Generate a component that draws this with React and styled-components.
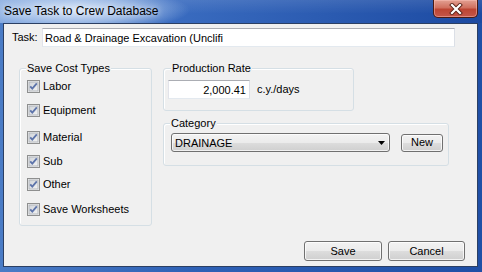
import React from 'react';
import styled, { createGlobalStyle } from 'styled-components';

const Global = createGlobalStyle`
  html, body { margin: 0; padding: 0; background: #fff; }
  body { font-family: "Liberation Sans", Arial, sans-serif; font-size: 11px; color: #000; }
  * { box-sizing: border-box; }
`;

const Window = styled.div`
  width: 482px;
  height: 272px;
  display: flex;
  flex-direction: column;
  overflow: hidden;
  background: linear-gradient(90deg, #4a7cc6 0%, #2e61b6 40%, #1f4fa6 100%);
`;

const TitleBar = styled.div`
  height: 23px;
  flex: none;
  display: flex;
  justify-content: space-between;
  align-items: flex-start;
  background:
    radial-gradient(ellipse 115px 22px at 75px 10px, rgba(225, 236, 250, 0.95) 0%, rgba(185, 208, 240, 0.7) 55%, rgba(150, 185, 235, 0) 100%),
    linear-gradient(180deg, rgba(255,255,255,0.1) 0%, rgba(255,255,255,0) 60%),
    linear-gradient(90deg, #779fda 0%, #3a6cc0 35%, #1c4aa2 100%);
`;

const Title = styled.div`
  font-family: "Liberation Sans", Arial, sans-serif;
  font-size: 12px;
  line-height: 14px;
  padding: 4px 0 0 4px;
  color: #000;
  text-shadow: 0 0 6px rgba(255, 255, 255, 0.9);
`;

const CloseButton = styled.div`
  width: 45px;
  height: 18px;
  margin-right: 4px;
  display: flex;
  align-items: center;
  justify-content: center;
  border: 1px solid #4a1a14;
  border-top: none;
  border-radius: 0 0 5px 5px;
  background: linear-gradient(180deg, #e3a092 0%, #d0705f 45%, #bd4533 55%, #c4564a 100%);
  box-shadow: inset 0 0 0 1px rgba(255, 200, 190, 0.45);
`;

const Client = styled.div`
  flex: 1;
  margin: 0 4px 5px 3px;
  border: 1px solid #2b3f63;
  background: #f0f0f0;
  display: flex;
  flex-direction: column;
  padding: 4px 0 0 8px;
`;

const TaskRow = styled.div`
  display: flex;
  align-items: center;
  height: 19px;
`;

const Label = styled.span`
  width: ${p => p.$w || 'auto'};
  white-space: nowrap;
  line-height: 13px;
`;

const TextBox = styled.div`
  width: ${p => p.$w}px;
  height: 19px;
  background: #fff;
  border: 1px solid;
  border-color: #abadb3 #dbdfe6 #e3e9ef #e2e3ea;
  display: flex;
  align-items: center;
  justify-content: ${p => (p.$right ? 'flex-end' : 'flex-start')};
  padding: 0 3px 0 2px;
  white-space: nowrap;
  overflow: hidden;
`;

const Main = styled.div`
  display: flex;
  margin-top: 21px;
`;

const GroupBox = styled.div`
  position: relative;
  width: ${p => p.$w}px;
  height: ${p => p.$h}px;
  margin-left: ${p => p.$ml || 0}px;
  border: 1px solid #d5dfe5;
  border-radius: 3px;
  box-shadow: inset 1px 1px 0 #fff;
  padding: ${p => p.$pad || '0'};
  flex: none;
`;

const Legend = styled.span`
  position: absolute;
  top: -7px;
  left: ${p => p.$left}px;
  padding: 0 1px;
  line-height: 13px;
  background: #f0f0f0;
  white-space: nowrap;
`;

const CheckList = styled.div`
  display: flex;
  flex-direction: column;
  padding-left: 7px;
`;

const CheckRow = styled.div`
  display: flex;
  align-items: center;
  height: 13px;
  margin-top: ${p => p.$mt}px;
  gap: 3px;
`;

const RightCol = styled.div`
  display: flex;
  flex-direction: column;
  gap: 12px;
  margin-left: 11px;
`;

const InlineRow = styled.div`
  display: flex;
  align-items: center;
  gap: ${p => p.$gap}px;
`;

const Combo = styled.div`
  width: 219px;
  height: 19px;
  border: 1px solid #707070;
  border-radius: 3px;
  background: linear-gradient(180deg, #f3f3f3 0%, #ebebeb 50%, #dddddd 51%, #cfcfcf 100%);
  box-shadow: inset 0 0 0 1px rgba(255, 255, 255, 0.7);
  display: flex;
  align-items: center;
  justify-content: space-between;
  padding: 0 4px 0 3px;
`;

const PushButton = styled.div`
  width: ${p => p.$w}px;
  height: ${p => p.$h}px;
  border: 1px solid #707070;
  border-radius: 3px;
  background: linear-gradient(180deg, #f2f2f2 0%, #ebebeb 50%, #dddddd 51%, #cfcfcf 100%);
  box-shadow: inset 0 0 0 1px rgba(255, 255, 255, 0.75);
  display: flex;
  align-items: center;
  justify-content: center;
  line-height: 13px;
`;

const ButtonRow = styled.div`
  display: flex;
  justify-content: flex-end;
  gap: 6px;
  margin-top: 15px;
  padding-right: 12px;
`;

const CheckBox = () => (
  <svg width="13" height="13" viewBox="0 0 13 13">
    <defs>
      <linearGradient id="cbg" x1="0" y1="0" x2="1" y2="1">
        <stop offset="0" stopColor="#cfd3d8" />
        <stop offset="1" stopColor="#f4f4f4" />
      </linearGradient>
    </defs>
    <rect x="0.5" y="0.5" width="12" height="12" fill="#f4f4f4" stroke="#8e8f8f" />
    <rect x="2" y="2" width="9" height="9" fill="url(#cbg)" stroke="#b3b7bd" strokeWidth="1" />
    <path d="M3.2 6.3 L5.3 8.6 L9.8 3.3" fill="none" stroke="#5d74aa" strokeWidth="1.8" />
  </svg>
);

const CloseGlyph = () => (
  <svg width="16" height="12" viewBox="0 0 16 12">
    <path d="M4 2 L12 10 M12 2 L4 10" stroke="#5a2218" strokeWidth="4" strokeLinecap="square" />
    <path d="M4 2 L12 10 M12 2 L4 10" stroke="#fff" strokeWidth="2.2" strokeLinecap="square" />
  </svg>
);

const Arrow = () => (
  <svg width="7" height="4" viewBox="0 0 7 4">
    <path d="M0 0 H7 L3.5 4 Z" fill="#000" />
  </svg>
);

const costTypes = [
  { label: 'Labor', mt: 11 },
  { label: 'Equipment', mt: 11 },
  { label: 'Material', mt: 14 },
  { label: 'Sub', mt: 11 },
  { label: 'Other', mt: 10 },
  { label: 'Save Worksheets', mt: 12 },
];

export default function App() {
  return (
    <>
      <Global />
      <Window>
        <TitleBar>
          <Title>Save Task to Crew Database</Title>
          <CloseButton><CloseGlyph /></CloseButton>
        </TitleBar>
        <Client>
          <TaskRow>
            <Label $w="30px">Task:</Label>
            <TextBox $w={413}>Road &amp; Drainage Excavation (Unclifi</TextBox>
          </TaskRow>
          <Main>
            <GroupBox $w={133} $h={158} $ml={7}>
              <Legend $left={6}>Save Cost Types</Legend>
              <CheckList>
                {costTypes.map(c => (
                  <CheckRow key={c.label} $mt={c.mt}>
                    <CheckBox />
                    <Label>{c.label}</Label>
                  </CheckRow>
                ))}
              </CheckList>
            </GroupBox>
            <RightCol>
              <GroupBox $w={191} $h={43} $pad="11px 0 0 4px">
                <Legend $left={7}>Production Rate</Legend>
                <InlineRow $gap={7}>
                  <TextBox $w={82} $right>2,000.41</TextBox>
                  <Label>c.y./days</Label>
                </InlineRow>
              </GroupBox>
              <GroupBox $w={286} $h={43} $pad="9px 0 0 7px">
                <Legend $left={6}>Category</Legend>
                <InlineRow $gap={11}>
                  <Combo>
                    <span>DRAINAGE</span>
                    <Arrow />
                  </Combo>
                  <PushButton $w={42} $h={18}>New</PushButton>
                </InlineRow>
              </GroupBox>
            </RightCol>
          </Main>
          <ButtonRow>
            <PushButton $w={78} $h={20}>Save</PushButton>
            <PushButton $w={77} $h={20}>Cancel</PushButton>
          </ButtonRow>
        </Client>
      </Window>
    </>
  );
}
